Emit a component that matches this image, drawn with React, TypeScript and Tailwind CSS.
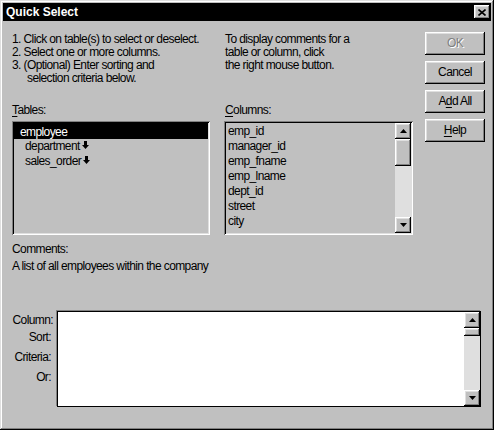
import React from "react";

const raised =
  "shadow-[inset_-1px_-1px_0_#000,inset_1px_1px_0_#fff,inset_-2px_-2px_0_#808080,inset_2px_2px_0_#dfdfdf]";
const sunken =
  "shadow-[inset_1px_1px_0_#808080,inset_-1px_-1px_0_#fff,inset_2px_2px_0_#000,inset_-2px_-2px_0_#dfdfdf]";

const ArrowUp = () => (
  <svg width="7" height="4" viewBox="0 0 7 4">
    <polygon points="0,4 3.5,0 7,4" fill="#000" />
  </svg>
);

const ArrowDown = () => (
  <svg width="7" height="4" viewBox="0 0 7 4">
    <polygon points="0,0 7,0 3.5,4" fill="#000" />
  </svg>
);

const LinkArrow = () => (
  <svg width="7" height="8" viewBox="0 0 7 8" className="ml-[2px] self-start mt-[2px]">
    <path d="M2 0h3v4h2L3.5 8 0 4h2z" fill="#000" />
  </svg>
);

const ScrollBtn = ({ dir }: { dir: "up" | "down" }) => (
  <div className={`h-[16px] w-[16px] bg-[#c0c0c0] flex items-center justify-center ${raised}`}>
    {dir === "up" ? <ArrowUp /> : <ArrowDown />}
  </div>
);

const Scrollbar = ({ thumb }: { thumb: number }) => (
  <div className="w-[16px] h-full flex flex-col bg-[#dfdfdf]">
    <ScrollBtn dir="up" />
    <div className={`w-[16px] bg-[#c0c0c0] ${raised}`} style={{ height: thumb }} />
    <div className="flex-1" />
    <ScrollBtn dir="down" />
  </div>
);

const Button = ({ children, disabled }: { children: React.ReactNode; disabled?: boolean }) => (
  <div
    className={`h-[23px] w-[60px] bg-[#c0c0c0] flex items-center justify-center ${raised} ${
      disabled ? "text-[#808080] [text-shadow:1px_1px_0_#fff]" : "text-black"
    }`}
  >
    {children}
  </div>
);

const columns = ["emp_id", "manager_id", "emp_fname", "emp_lname", "dept_id", "street", "city"];

export default function App() {
  return (
    <div className="w-[494px] h-[430px] bg-[#c0c0c0] p-[3px] flex flex-col text-[12px] leading-[13px] tracking-[-0.6px] whitespace-nowrap text-black font-['Liberation_Sans',Arial,sans-serif] shadow-[inset_-1px_-1px_0_#000,inset_1px_1px_0_#dfdfdf,inset_-2px_-2px_0_#808080,inset_2px_2px_0_#fff]">
      {/* title bar */}
      <div className="h-[18px] bg-black flex items-center justify-between pl-[3px] pr-[1px]">
        <span className="text-white font-bold text-[12px] tracking-normal">Quick Select</span>
        <div className={`w-[16px] h-[14px] bg-[#c0c0c0] flex items-center justify-center ${raised}`}>
          <svg width="8" height="7" viewBox="0 0 8 7">
            <path d="M0.5 0.5L7.5 6.5M7.5 0.5L0.5 6.5" stroke="#000" strokeWidth="1.6" />
          </svg>
        </div>
      </div>

      <div className="flex-1 pl-[9px] flex flex-col">
        <div className="flex">
          {/* left part */}
          <div className="w-[401px] flex flex-col">
            <div className="flex mt-[12px]">
              <div className="w-[213px]">
                <div>1. Click on table(s) to select or deselect.</div>
                <div>2. Select one or more columns.</div>
                <div>3. (Optional) Enter sorting and</div>
                <div className="pl-[15px]">selection criteria below.</div>
              </div>
              <div>
                <div>To display comments for a</div>
                <div>table or column, click</div>
                <div>the right mouse button.</div>
              </div>
            </div>

            <div className="flex mt-[19px] gap-[14px]">
              <div className="w-[198px] flex flex-col">
                <div className="h-[13px] mb-[4px]">
                  <span className="underline underline-offset-2">T</span>ables:
                </div>
                <div className={`h-[114px] p-[2px] ${sunken}`}>
                  <div className="h-[16px] bg-black text-white flex items-center pl-[6px] pt-[2px]">employee</div>
                  <div className="h-[15px] flex items-center pl-[11px]">
                    department
                    <LinkArrow />
                  </div>
                  <div className="h-[15px] flex items-center pl-[11px]">
                    sales_order
                    <LinkArrow />
                  </div>
                </div>
              </div>
              <div className="w-[189px] flex flex-col">
                <div className="h-[13px] mb-[4px] pl-[1px]">
                  <span className="underline underline-offset-2">C</span>olumns:
                </div>
                <div className={`h-[114px] p-[2px] flex ${sunken}`}>
                  <div className="flex-1 pt-[1px] pl-[2px]">
                    {columns.map((c) => (
                      <div key={c} className="h-[15px] flex items-center">
                        {c}
                      </div>
                    ))}
                  </div>
                  <Scrollbar thumb={27} />
                </div>
              </div>
            </div>
          </div>

          {/* buttons */}
          <div className="ml-[12px] mt-[11px] flex flex-col gap-[6px]">
            <Button disabled>OK</Button>
            <Button>Cancel</Button>
            <Button>
              <span>
                A<span className="underline underline-offset-2">d</span>d All
              </span>
            </Button>
            <Button>
              <span>
                <span className="underline underline-offset-2">H</span>elp
              </span>
            </Button>
          </div>
        </div>

        <div className="mt-[8px]">Comments:</div>
        <div className="mt-[4px]">A list of all employees within the company</div>

        <div className="flex mt-[38px]">
          <div className="w-[41px] flex flex-col items-end pt-[3px]">
            <div className="h-[13px]">Column:</div>
            <div className="h-[13px] mt-[4px] pr-[2px]">Sort:</div>
            <div className="h-[13px] mt-[7px] pr-[2px]">Criteria:</div>
            <div className="h-[13px] mt-[7px] pr-[2px]">Or:</div>
          </div>
          <div className="ml-[4px] w-[424px] h-[96px] bg-white border border-black shadow-[-1px_-1px_0_#808080] flex justify-end">
            <Scrollbar thumb={8} />
          </div>
        </div>
      </div>
    </div>
  );
}
